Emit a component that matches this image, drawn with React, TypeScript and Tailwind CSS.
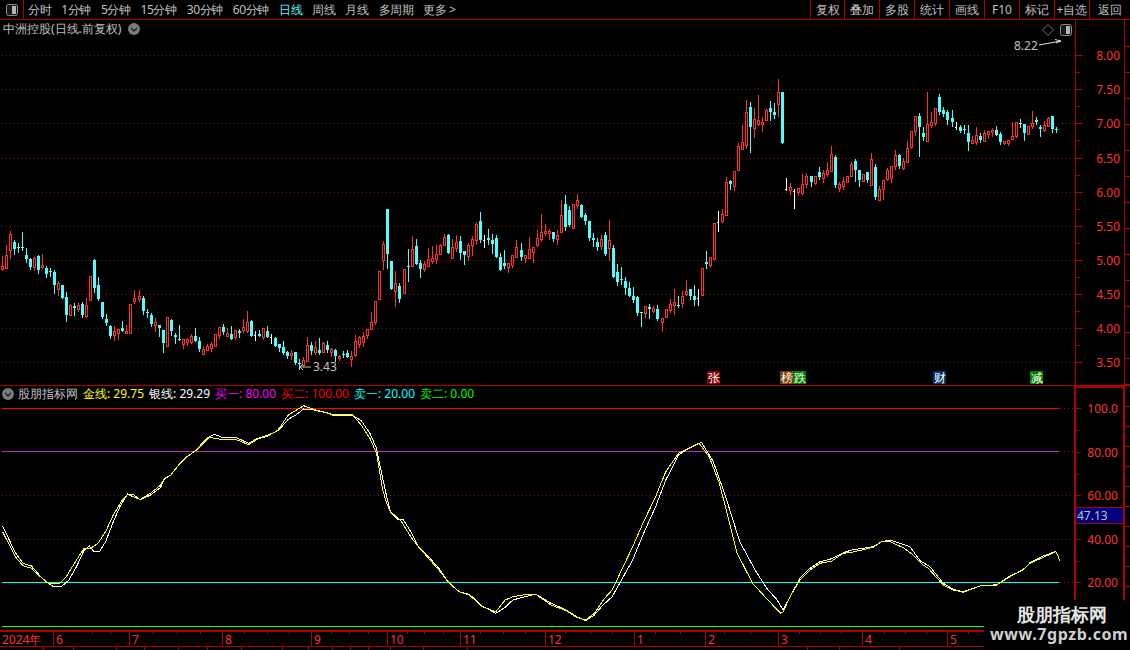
const RED = "#ff3232";
const CYAN = "#54fcfc";
const DARK = "#b00000";
const DOT = "#8c1414";

const SEGMENTS: { x0: number; y0: number; d: string }[] = [
  { x0: 2.33, y0: 220, d: "r 108 138 148 150,r 75 105 143 143,r 33 42 90 113,c 60 66 87 102,c 68 80 84 95,c 36 82 85 90,c 84 105 118 126,c 113 116 142 147,r 110 114 140 150,c 105 107 150 160,r 102 136 142 145,c 138 144 162 171,c 145 152 155 167,c 150 156 195 220,r 183 190 207 225,c 195 195 234 234,c 216 231 285 303,r 252 255 285 285,c 250 258 263 285,r 250 256 267 273,c 246 252 285 290,r 234 255 288 291,r 168 168 240 240,c 117 120 204 216,c 171 195 237 240,c 246 246 291 294,c 282 297 309 315,c 315 318 348 354,r 318 333 345 360,r 327 327 339 357,c 303 324 333 333,r 315 333 339 339,r 252 252 339 339,r 210 234 243 249,r 210 228 237 243,c 228 234 273 282,c 267 276 279 291,c 279 285 312 318,r 294 306 315 333,c 315 315 324 348,c 330 330 369 396,r 291 291 378 378,c 297 300 333 345,c 339 345 351 369,c 315 357 360 360,r 357 357 372 384,r 354 357 366 375,r 342 348 366 369,c 324 348 363 363,c 351 363 387 393,r 378 387 402 402,r 372 378 390 390,r 366 372 384 393,r 342 342 378 378,r 321 321 345 354,c 312 321 336 342,r 324 339 348 348,c 318 342 357 357,r 330 330 351 357,c 327 333 339 351,r 297 321 330 336,r 273 306 333 336,c 300 303 348 348,w 333 345 348 360,c 330 342 348 348" },
  { x0: 263.3, y0: 190, d: "r 414 414 441 447,c 408 423 441 441,w 432 441 444 459,c 441 444 468 468,c 462 462 474 483,c 453 471 489 492,c 483 486 498 504,r 480 489 495 507,c 486 486 519 522,c 507 519 522 537,r 501 510 525 528,r 441 465 513 513,c 456 465 483 492,r 453 471 486 492,c 444 480 489 492,r 456 459 486 486,c 453 465 480 486,r 474 477 486 498,c 477 480 498 513,r 495 498 504 510,c 483 492 495 501,c 480 489 501 501,r 483 498 507 528,r 435 453 495 498,r 438 441 462 471,r 426 438 456 468,r 417 417 435 444,r 366 396 417 417,r 333 333 396 402,r 243 243 327 327,r 153 162 210 237,c 57 57 192 234,c 213 213 297 297,r 243 279 303 348,c 279 288 327 336,r 237 237 309 309,c 177 228 231 273,r 138 177 228 228,c 147 168 222 222,c 210 219 237 261,r 213 222 237 243,r 174 207 228 228,r 168 204 213 219,r 165 192 207 219,r 162 165 192 192,r 132 141 165 165,c 132 135 189 189,r 147 171 204 204,r 135 156 174 183,c 138 153 189 207,c 183 183 195 222,r 159 165 198 210,r 138 147 165 195,r 96 102 150 162,c 66 93 150 156,w 135 150 153 171,c 117 144 150 162,c 132 150 162 189,c 135 144 201 201,c 189 201 240 240,c 180 219 228 234,r 219 219 231 246,r 195 195 225 231,r 150 171 201 201" },
  { x0: 521.3, y0: 70, d: "c 519 540 561 570,r 555 555 564 576,r 501 537 564 564,r 531 531 546 576,r 480 504 525 528,r 432 486 507 513,r 462 483 489 495,r 477 483 489 507,c 486 486 507 513,r 480 495 507 522,r 390 435 486 486,c 375 402 471 480,c 408 420 465 468,r 402 402 474 474,r 372 390 405 414,c 402 405 441 441,c 429 435 453 462,c 453 453 504 510,c 489 504 510 528,c 504 516 531 540,r 495 507 528 537,c 486 495 552 555,r 450 510 534 570,c 525 534 621 621,c 582 606 636 645,c 591 627 630 642,c 621 633 654 672,c 636 654 678 678,c 651 678 690 696,c 678 681 729 735,c 726 726 729 768,r 708 708 729 741,c 702 711 717 744,r 708 714 723 726,c 705 717 747 750,r 744 744 756 783,r 717 717 741 741,r 687 702 720 726,r 657 696 705 732,c 678 705 708 711,r 663 678 699 711,r 630 663 672 675,c 657 657 678 687,c 645 678 690 705,w 657 684 687 705,r 594 594 675 675,c 543 576 582 594,r 561 561 585 591,r 459 459 567 567,w 423 456 459 483,r 417 432 453 456,r 321 336 435 435,c 330 333 342 357,r 303 303 348 360,r 219 228 300 300,r 165 216 237 237,r 90 126 225 234,c 96 111 171 246,r 114 147 174 201,r 75 150 162 165,r 141 156 162 183,r 117 120 150 150,c 93 114 126 150,c 99 126 135 144,r 27 66 102 138,c 66 66 219 219,w 324 357 360 360,r 339 351 360 372,w 357 363 366 414,r 354 354 366 375,r 312 342 369 372,r 309 318 342 351" },
  { x0: 811.3, y0: 80, d: "c 288 288 306 318,r 288 288 309 312,c 261 276 291 297,r 270 279 294 306,r 246 270 282 288,r 198 222 273 273,c 225 231 315 321,r 306 312 324 333,r 291 303 318 327,r 288 288 306 306,r 246 252 288 288,c 237 243 270 303,c 270 270 300 318,r 282 282 303 303,c 276 276 300 306,r 219 237 315 315,c 252 261 351 357,r 318 327 360 360,r 300 300 327 357,r 264 270 297 300,r 258 258 294 306,r 210 225 258 267,c 222 225 258 264,r 234 243 264 267,r 183 204 246 246,r 153 153 201 204,r 108 108 153 165,c 99 108 141 228,c 141 159 171 180,r 36 132 183 183,r 96 126 135 141,r 84 84 129 135,c 42 51 96 102,c 81 90 102 108,c 90 96 120 132,c 90 114 126 138,w 126 141 144 147,c 135 141 153 156,c 135 147 150 159,c 135 159 186 210,r 168 180 189 189,r 141 165 186 192,c 159 168 180 186,r 150 159 183 183,r 153 153 162 174,r 144 150 156 168,c 138 150 165 165,c 156 162 186 192,r 183 183 189 192,r 180 180 189 195,r 126 168 177 177,r 126 126 168 171,c 117 129 132 141,c 132 132 159 180,r 138 138 162 162,r 93 129 138 144,c 111 120 126 132,c 135 141 147 168,r 123 135 150 153,r 111 114 138 138,c 108 108 147 156,c 141 147 150 156" },
];

type Candle = { x: number; kind: string; hi: number; top: number; bot: number; lo: number };
const CANDLES: Candle[] = SEGMENTS.flatMap((s) =>
  s.d.split(",").map((row, i) => {
    const [kind, a, b, c, d] = row.split(" ");
    const y = (v: string) => Math.round(s.y0 + Number(v) / 3);
    return { x: Math.floor(s.x0 + 4.02 * i), kind, hi: y(a), top: y(b), bot: y(c), lo: y(d) };
  })
);

const toPts = (left: number[], right: number[]) => {
  const out: string[] = [];
  for (let i = 0; i < left.length; i += 2) out.push(`${(left[i] / 1.96).toFixed(1)},${(400 + left[i + 1] / 3).toFixed(1)}`);
  for (let i = 0; i < right.length; i += 2) out.push(`${(780 + right[i] / 3).toFixed(1)},${(500 + right[i + 1] / 3).toFixed(1)}`);
  return out.join(" ");
};

const WHITE_LINE = toPts(
  [5,378,15,410,30,458,45,490,62,498,75,522,90,545,105,560,122,558,135,540,150,500,165,450,175,438,185,456,195,455,207,425,222,365,235,320,250,282,262,285,275,300,295,285,315,262,322,238,335,225,350,195,365,172,385,150,405,115,420,103,435,112,462,112,487,130,505,115,525,105,545,92,565,58,580,45,595,27,615,30,640,38,655,47,690,45,708,62,725,100,738,145,748,220,758,290,765,335,780,358,790,358,805,395,820,440,840,470,860,505,880,550,900,575,920,583,945,618,972,640,990,622,1005,600,1025,592,1050,582,1080,610,1110,630,1130,650,1148,662,1165,645,1180,618,1200,590,1220,535,1240,480,1260,405,1285,320,1305,240,1330,165,1350,145,1375,127,1398,185,1420,280,1450,425,1480,510,1505,570,1522,597],
  [0,315,10,330,30,290,60,235,90,205,120,185,155,176,190,158,215,150,280,140,305,125,330,120,390,140,420,182,450,200,490,250,520,268,550,275,600,258,650,254,690,228,730,210,750,188,790,168,825,155]
);
const YELLOW_LINE = toPts(
  [5,395,15,425,30,470,45,497,62,505,75,525,95,550,115,552,130,530,150,480,165,445,178,445,192,430,207,395,222,345,240,300,250,283,265,293,275,298,295,280,315,255,322,235,335,225,350,195,365,172,385,150,410,112,440,120,462,118,487,134,505,117,525,108,545,90,565,45,595,17,615,28,640,38,655,45,690,43,708,75,725,115,738,160,750,270,758,310,765,335,785,360,805,410,820,440,840,475,860,510,880,548,900,575,920,585,945,620,972,635,990,600,1005,590,1025,585,1050,583,1080,615,1110,632,1130,652,1148,660,1165,640,1185,595,1200,570,1220,505,1240,440,1260,370,1285,290,1305,215,1330,160,1350,145,1370,130,1390,170,1410,250,1445,460,1475,550,1505,600,1530,640],
  [10,335,30,290,60,240,90,210,120,190,155,183,190,160,215,157,280,142,305,125,330,125,370,143,400,165,425,192,445,205,490,255,520,270,550,277,600,258,650,255,690,230,730,208,750,190,790,172,828,155,840,183]
);

const GRID = [55, 89.2, 123.3, 157.5, 191.6, 225.8, 259.9, 294.1, 328.2, 362.3].map(Math.round);
const PRICE = ["8.00", "7.50", "7.00", "6.50", "6.00", "5.50", "5.00", "4.50", "4.00", "3.50"];
const TABS = ["分时", "1分钟", "5分钟", "15分钟", "30分钟", "60分钟", "日线", "周线", "月线", "多周期", "更多 >"];
const BUTTONS: [string, string][] = [["复权", "w-[34px]"], ["叠加", "w-[35px]"], ["多股", "w-[35px]"], ["统计", "w-[35px]"], ["画线", "w-[35px]"], ["F10", "w-[35px]"], ["标记", "w-[35px]"], ["+自选", "w-[35px]"], ["返回", "w-[41px]"]];
const MONTHS: [string, string][] = [["2024年", "w-[53px]"], ["6", "w-[76px]"], ["7", "w-[93px]"], ["8", "w-[89px]"], ["9", "w-[76px]"], ["10", "w-[73px]"], ["11", "w-[85px]"], ["12", "w-[89px]"], ["1", "w-[71px]"], ["2", "w-[73px]"], ["3", "w-[84px]"], ["4", "w-[85px]"], ["5", "w-[183px]"]];
const TIME_TICKS = [92, 110, 153, 177, 200, 244, 267, 289, 331, 349, 368, 407, 424, 443, 480, 503, 525, 565, 590, 612, 655, 680, 724, 750, 799, 820, 841, 884, 905, 926, 968];
const STRIP = ["w-[44px]", "w-[30px]", "w-[43px]", "w-[28px]", "w-[34px]", "w-[29px]", "w-[34px]", "w-[41px]", "w-[26px]", "w-[24px]", "w-[18px]", "w-[18px]", "w-[22px]", "w-[33px]", "w-[44px]", "w-[340px]", "w-[32px]", "w-[60px]"];
const LEGEND: [string, string, string][] = [["金线", "29.75", "text-[#ffff00]"], ["银线", "29.29", "text-white"], ["买一", "80.00", "text-[#ff00ff]"], ["买二", "100.00", "text-[#ff0000]"], ["卖一", "20.00", "text-[#00ffff]"], ["卖二", "0.00", "text-[#00ff00]"]];
const FLAGS: [string, string, string][] = [["张", "left-[707px]", "bg-[#800000]"], ["榜", "left-[780px]", "bg-[#804000]"], ["跌", "left-[793px]", "bg-[#008000]"], ["财", "left-[933px]", "bg-[#003366]"], ["减", "left-[1030px]", "bg-[#008000]"]];
const SUB_Y: [number, string][] = [[408, "100.0"], [452, "80.00"], [495, "60.00"], [539, "40.00"], [582, "20.00"]];

function CircleDown() {
  return (
    <svg width="12" height="12" viewBox="0 0 12 12" className="shrink-0">
      <circle cx="6" cy="6" r="6" fill="#7a7a7a" />
      <path d="M3 5l3 3 3-3" fill="none" stroke="#222" strokeWidth="1.4" />
    </svg>
  );
}

function PanelIcon() {
  return (
    <svg width="12" height="12" viewBox="0 0 12 12">
      <rect x="0.5" y="0.5" width="11" height="11" rx="2" fill="#1a1a1a" stroke="#8a8a8a" />
      <rect x="6" y="2" width="4" height="8" fill="#b4b4b4" />
    </svg>
  );
}

function CandleMark({ c }: { c: Candle }) {
  const cx = c.x + 0.5;
  if (c.kind === "w") {
    return (
      <g stroke="#ffffff" shapeRendering="crispEdges">
        <line x1={cx} x2={cx} y1={c.hi} y2={c.lo + 1} />
        <line x1={cx - 2} x2={cx} y1={c.top + 0.5} y2={c.top + 0.5} />
      </g>
    );
  }
  if (c.kind === "c") {
    return (
      <g shapeRendering="crispEdges">
        <line x1={cx} x2={cx} y1={c.hi} y2={c.lo + 1} stroke={CYAN} />
        <rect x={c.x - 1} y={c.top} width="3" height={Math.max(1, c.bot - c.top)} fill={CYAN} />
      </g>
    );
  }
  return (
    <g shapeRendering="crispEdges" stroke={RED}>
      <line x1={cx} x2={cx} y1={c.hi} y2={c.top} />
      <line x1={cx} x2={cx} y1={c.bot} y2={c.lo + 1} />
      <rect x={c.x - 0.5} y={c.top + 0.5} width="2" height={Math.max(1, c.bot - c.top)} fill="#000" />
    </g>
  );
}

function Rail({ y0, h, step }: { y0: number; h: number; step: number }) {
  const ticks: number[] = [];
  for (let y = y0 + step; y < y0 + h; y += step) ticks.push(y);
  return (
    <svg width="5" height={h} viewBox={`0 ${y0} 5 ${h}`} className="block" shapeRendering="crispEdges">
      {ticks.map((y) => (
        <line key={y} x1="0" x2="5" y1={y + 0.5} y2={y + 0.5} stroke={DARK} />
      ))}
    </svg>
  );
}

export default function App() {
  return (
    <div className="relative w-[1130px] h-[650px] overflow-hidden bg-black text-[12px] leading-none text-[#c0c0c0] font-['Liberation_Sans','Noto_Sans_CJK_SC',sans-serif] flex flex-col">
      <header className="h-[20px] shrink-0 flex border-b border-[#b00000]">
        <div className="w-[24px] flex items-center justify-center border-r border-[#b00000]">
          <PanelIcon />
        </div>
        <nav className="flex items-center gap-[10px] pl-[4px] tracking-[-0.4px]">
          {TABS.map((t) => (
            <span key={t} className={t === "日线" ? "text-[#54fcfc]" : ""}>{t}</span>
          ))}
        </nav>
        <div className="ml-auto flex">
          {BUTTONS.map(([t, w]) => (
            <span key={t} className={`${w} flex items-center justify-center border-l border-[#b00000]`}>{t}</span>
          ))}
        </div>
      </header>

      <section className="h-[366px] shrink-0 flex border-b border-[#b00000]">
        <div className="relative w-[1076px] border-r border-[#b00000]">
          <svg width="1075" height="365" viewBox="0 20 1075 365" className="block">
            {GRID.map((y) => (
              <line key={y} x1="2" x2="1075" y1={y + 0.5} y2={y + 0.5} stroke={DOT} strokeDasharray="1 3" />
            ))}
            {CANDLES.map((c, i) => (
              <CandleMark key={i} c={c} />
            ))}
            <text x="1014" y="50" fill="#c0c0c0" fontSize="12">8.22</text>
            <path d="M1039 45L1061 41M1055 39.5L1061 41L1056 43" fill="none" stroke="#e0e0e0" />
            <text x="313" y="371" fill="#c0c0c0" fontSize="12">3.43</text>
            <path d="M311 367H300M303 364L300 367L303 370" fill="none" stroke="#c0c0c0" />
            <path d="M1048 24.5L1053.5 30L1048 35.5L1042.5 30Z" fill="none" stroke="#777" />
          </svg>
          <div className="absolute left-[3px] top-[3px] flex items-center gap-[7px]">
            <span>中洲控股(日线.前复权)</span>
            <CircleDown />
          </div>
          <div className="absolute left-[1060px] top-[4px]">
            <PanelIcon />
          </div>
          {FLAGS.map(([t, left, bg]) => (
            <span key={t} className={`absolute top-[351px] w-[13px] h-[13px] flex items-center justify-center text-white ${left} ${bg}`}>{t}</span>
          ))}
        </div>
        <div className="w-[49px] border-r border-[#b00000]">
          <svg width="48" height="365" viewBox="1076 20 48 365" className="block">
            {GRID.map((y, i) => (
              <g key={y}>
                <line x1="1076" x2="1083" y1={y + 0.5} y2={y + 0.5} stroke={DARK} />
                {i < 9 && <line x1="1076" x2="1080" y1={y + 17.5} y2={y + 17.5} stroke={DARK} />}
                <text x="1120" y={y + 5} fill={RED} fontSize="12" textAnchor="end">{PRICE[i]}</text>
              </g>
            ))}
          </svg>
        </div>
        <div className="flex-1">
          <Rail y0={20} h={365} step={26} />
        </div>
      </section>

      <section className="h-[244px] shrink-0 flex">
        <div className="relative w-[1076px] border-r-2 border-[#b00000]">
          <svg width="1074" height="244" viewBox="0 386 1074 244" className="block">
            <line x1="2" x2="1059" y1="408.5" y2="408.5" stroke="#ff0000" />
            <line x1="2" x2="1059" y1="451.5" y2="451.5" stroke="#d020d0" />
            <line x1="2" x2="1074" y1="495.5" y2="495.5" stroke={DOT} strokeDasharray="1 3" />
            <line x1="2" x2="1074" y1="539.5" y2="539.5" stroke={DOT} strokeDasharray="1 3" />
            <line x1="2" x2="1059" y1="582.5" y2="582.5" stroke="#00ffff" />
            <line x1="2" x2="1059" y1="626.5" y2="626.5" stroke="#00ff00" />
            {[408.5, 451.5, 582.5].map((y) => (
              <line key={y} x1="1060" x2="1074" y1={y} y2={y} stroke={DOT} strokeDasharray="1 3" />
            ))}
            <polyline points={WHITE_LINE} fill="none" stroke="#ffffff" shapeRendering="crispEdges" />
            <polyline points={YELLOW_LINE} fill="none" stroke="#ffff00" shapeRendering="crispEdges" />
          </svg>
          <div className="absolute left-[2px] top-[1px] h-[14px] flex items-center">
            <CircleDown />
            <span className="ml-[4px] mr-[5px]">股朋指标网</span>
            {LEGEND.map(([k, v, color]) => (
              <span key={k} className={`mr-[5px] whitespace-nowrap ${color}`}>{k}: {v}</span>
            ))}
          </div>
        </div>
        <div className="relative w-[49px] border-t-2 border-r-2 border-[#b00000]">
          <svg width="47" height="242" viewBox="1078 388 47 242" className="block">
            {SUB_Y.map(([y, t]) => (
              <g key={t}>
                <line x1="1078" x2="1083" y1={y + 0.5} y2={y + 0.5} stroke={DARK} />
                <line x1="1078" x2="1081" y1={y + 22.5} y2={y + 22.5} stroke={DARK} />
                <text x="1120" y={y + 5} fill={RED} fontSize="12" textAnchor="end">{t}</text>
              </g>
            ))}
          </svg>
          <div className="absolute left-0 right-0 top-[119px] h-[17px] bg-[#000080] border-y border-[#b00000] flex items-center pl-[1px] text-[#c0c0c0]">47.13</div>
        </div>
        <div className="flex-1">
          <Rail y0={386} h={244} step={20} />
        </div>
      </section>

      <footer className="h-[17px] shrink-0 relative flex border-t-2 border-b border-[#b00000] text-[#ff3232]">
        {MONTHS.map(([t, w], i) => (
          <span key={t} className={`${w} flex items-center pl-[2px] pt-[1px] border-[#b00000] ${i ? "border-l" : ""}`}>{t}</span>
        ))}
        <svg width="984" height="3" className="absolute left-0 top-0">
          {TIME_TICKS.map((x) => (
            <line key={x} x1={x + 0.5} x2={x + 0.5} y1="0" y2="2" stroke={DARK} />
          ))}
        </svg>
      </footer>

      <div className="flex-1 overflow-hidden flex">
        {STRIP.map((w, i) => (
          <span key={i} className={`h-full shrink-0 border-r border-[#b00000] ${w}`} />
        ))}
      </div>

      <aside className="absolute right-0 bottom-0 w-[146px] h-[50px] bg-black flex flex-col items-start pt-[5px] font-bold">
        <span className="ml-[33px] text-[18px] leading-[18px] text-[#e6e6e6]">股朋指标网</span>
        <span className="ml-[6px] mt-[2px] text-[16px] leading-[18px] tracking-[0.6px] whitespace-nowrap text-[#d0d0d0]">www.7gpzb.com</span>
      </aside>
    </div>
  );
}
